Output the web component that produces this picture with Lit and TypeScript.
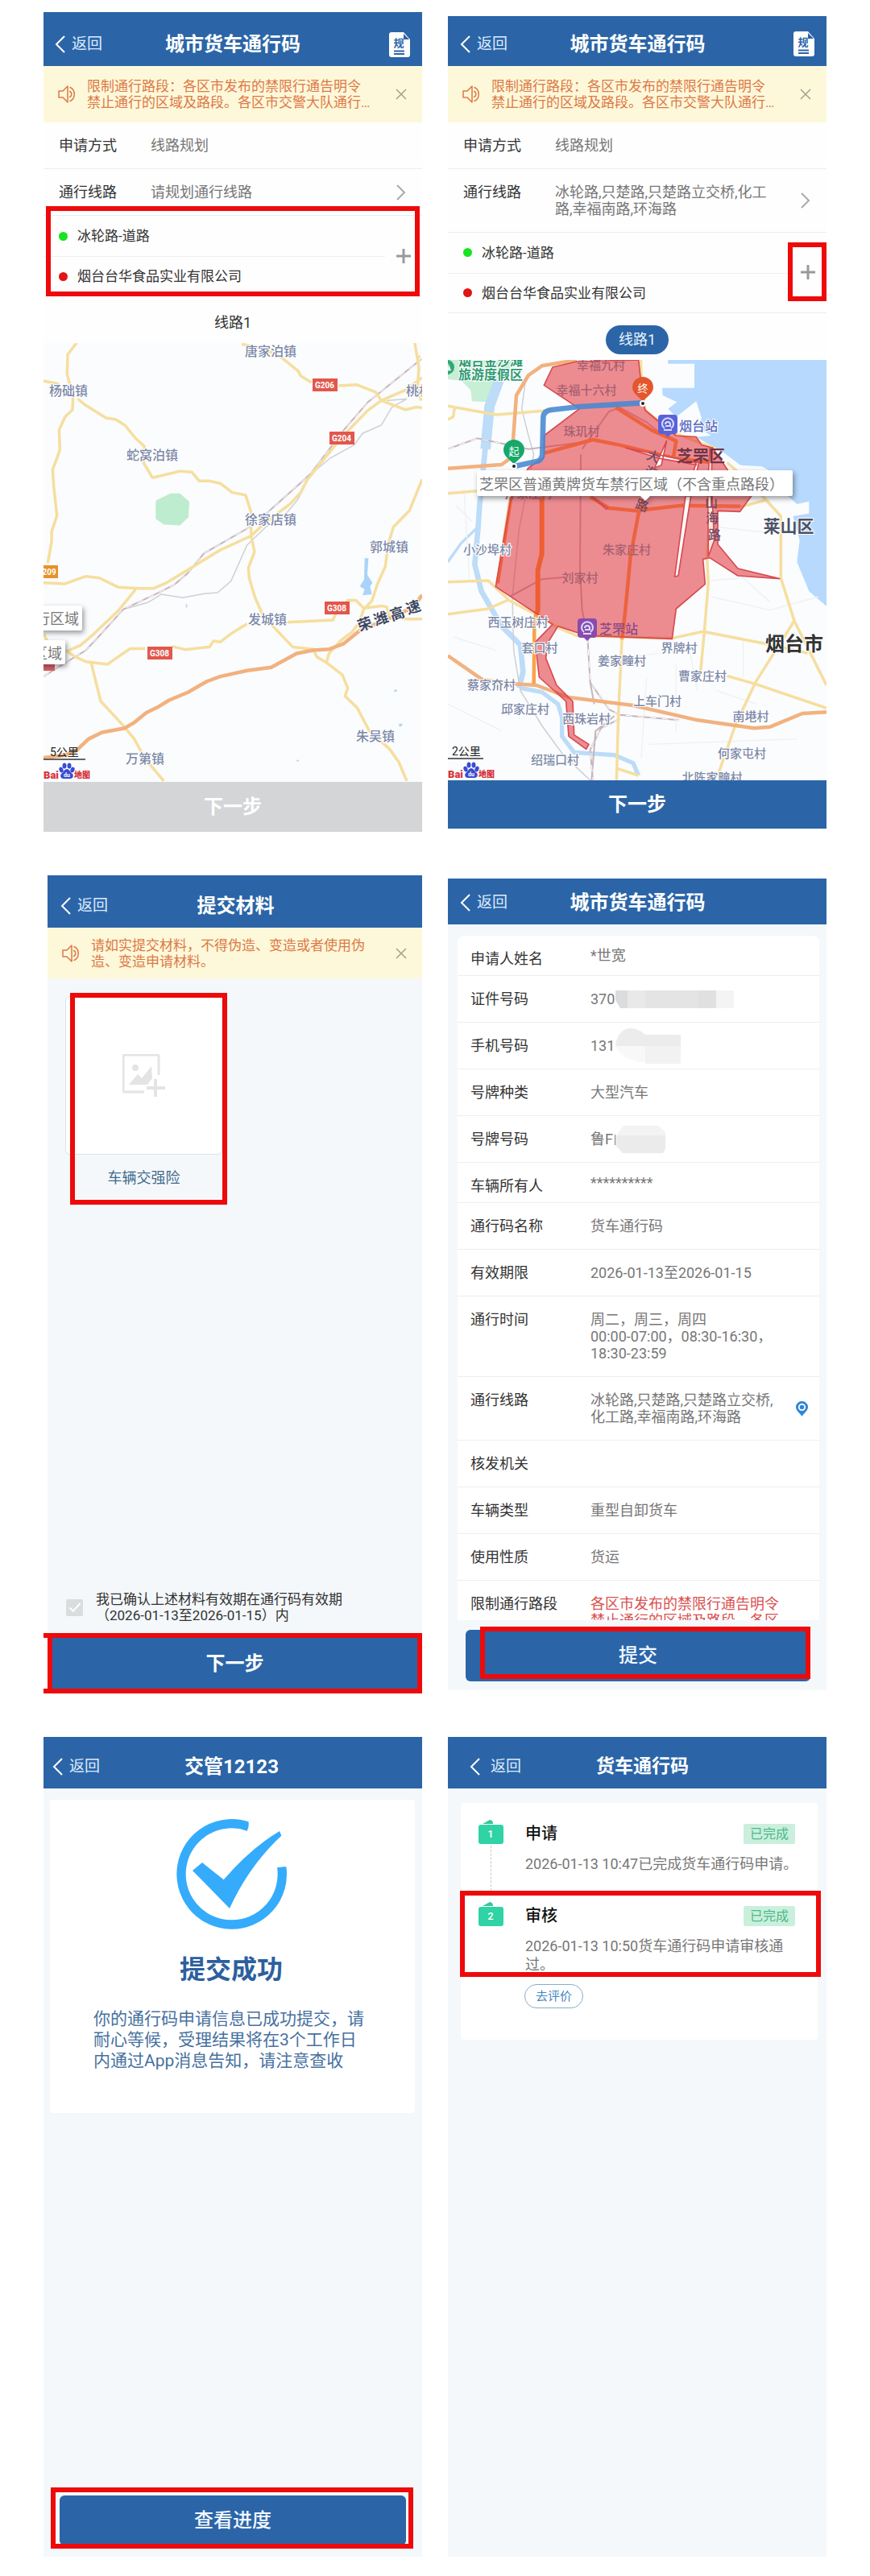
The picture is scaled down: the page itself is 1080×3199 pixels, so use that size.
import { LitElement, html, svg, css, nothing } from "lit";
import { customElement, property } from "lit/decorators.js";
import { classMap } from "lit/directives/class-map.js";

const base = css`
  :host {
    display: block;
    font-family: Roboto, "Noto Sans CJK SC", "Liberation Sans", sans-serif;
    color: #333;
  }
  *, *::before, *::after { box-sizing: border-box; }
  button { font: inherit; color: inherit; background: none; border: 0; padding: 0; margin: 0; cursor: pointer; }
  h1, h2, h3, p, ul, ol, dl, dd, dt { margin: 0; padding: 0; font-weight: inherit; font-size: inherit; }
  ul, ol { list-style: none; }
  svg { display: block; }
`;

@customElement("nav-bar")
class NavBar extends LitElement {
  @property() heading = "";
  @property({ type: Boolean }) rules = false;

  static styles = [base, css`
    .bar {
      display: grid;
      grid-template-columns: 1fr auto 1fr;
      align-items: center;
      height: calc(54px + var(--strip, 10px));
      padding: var(--strip, 10px) 14px 0 var(--lead, 14px);
      background: #2b65a7;
      color: #fff;
    }
    .back { display: flex; align-items: center; gap: var(--back-gap, 8px); font-size: 19px; line-height: 24px; color: #dcebff; text-decoration: none; }
    .title { font-size: var(--title-size, 24px); line-height: 32px; font-weight: 700; }
    .rules { justify-self: end; }
  `];

  render() {
    return html`<header class="bar">
      <a class="back" href="#back">
        <svg width="13" height="22" viewBox="0 0 13 22" fill="none" stroke="#fff" stroke-width="2"><path d="M12 1 2 11l10 10" /></svg>
        返回
      </a>
      <h2 class="title">${this.heading}</h2>
      ${this.rules ? html`<button class="rules" aria-label="规则">
        <svg width="27" height="31" viewBox="0 0 27 31">
          <path d="M3 0h15l8 9v19a3 3 0 0 1-3 3H3a3 3 0 0 1-3-3V3a3 3 0 0 1 3-3z" fill="#fff" />
          <path d="M18 2v7h7z" fill="#2b65a7" />
          <text x="12" y="18" font-size="13" font-weight="700" text-anchor="middle" fill="#2b65a7">规</text>
          <path d="M6 23.500h13M6 27h13" stroke="#2b65a7" stroke-width="2" />
        </svg>
      </button>` : nothing}
    </header>`;
  }
}

@customElement("notice-bar")
class NoticeBar extends LitElement {
  @property() text = "";

  static styles = [base, css`
    .notice {
      display: grid;
      grid-template-columns: 22px 1fr 16px;
      column-gap: 14px;
      align-items: center;
      min-height: var(--notice-height, 70px);
      padding: 0 17px 0 18px;
      background: #fdf8d9;
      color: #dc7847;
      font-size: 17px;
      line-height: 20px;
    }
    .text { max-width: 356px; }
  `];

  render() {
    return html`<div class="notice" role="status">
      <svg width="22" height="22" viewBox="0 0 22 22" fill="none" stroke="#dc7847" stroke-width="1.500" stroke-linejoin="round">
        <path d="M1 7h5l6-6v20l-6-6H1z" />
        <path d="M15 2.500c7 3 7 14 0 17M14.500 7.500c3 1 3 6 0 7" stroke-linecap="round" />
      </svg>
      <p class="text">${this.text}</p>
      <button aria-label="关闭">
        <svg width="14" height="14" viewBox="0 0 14 14" stroke="#a3a08f" stroke-width="1.500"><path d="M1 1l12 12M13 1 1 13" /></svg>
      </button>
    </div>`;
  }
}

type Label = [number, number, string];

const scaleAndLogo = (x: number, y: number, label: string, width: number) => svg`
  <text class="scale" x=${x} y=${y - 9}>${label}</text>
  <path d="M0 ${y}H${width}" stroke="#333" stroke-width="1.500" />
  <g transform="translate(0 ${y + 19})">
    <text class="logo latin" x="0" y="0">Bai</text>
    <g fill="#3b4bd0">
      <ellipse cx="22" cy="-6" rx="2.500" ry="3.500" transform="rotate(-20 22 -6)" />
      <ellipse cx="26" cy="-11" rx="2.500" ry="3.500" />
      <ellipse cx="32" cy="-11" rx="2.500" ry="3.500" />
      <ellipse cx="36" cy="-6" rx="2.500" ry="3.500" transform="rotate(20 36 -6)" />
      <path d="M29-7c3 0 4 4 7 6 2 3 0 6-3 6h-8c-3 0-5-3-3-6 3-2 4-6 7-6z" />
    </g>
    <text class="du" x="29" y="1">du</text>
    <text class="logo" x="38" y="0">地图</text>
  </g>`;

const mapStyles = [base, css`
  svg { width: 100%; height: auto; overflow: hidden; background: #fafcfe; }
  text { dominant-baseline: central; }
  .place { font-size: 15px; font-weight: 500; fill: #7c88a8; text-anchor: middle; paint-order: stroke; stroke: #fff; stroke-width: 2px; }
  .town { font-size: 16px; }
  .inside { stroke: none; fill: #a9606f; }
  .scale { font-size: 14px; fill: #222; }
  .logo { font-size: 10px; font-weight: 900; fill: #d8323a; }
  .latin { font-size: 13px; }
  .du { font-size: 7px; font-weight: 700; fill: #fff; text-anchor: middle; }
  .shield { font-size: 10px; font-weight: 700; fill: #fff; text-anchor: middle; }
  .tip { font-size: 18px; fill: #777; }
  .box { filter: drop-shadow(2px 3px 3px rgba(0, 0, 0, 0.4)); }
  .road { fill: none; stroke: #f6de9d; stroke-linejoin: round; vector-effect: non-scaling-stroke; stroke-width: 3.500px; }
  .highway { fill: none; stroke: #f2b17e; stroke-linejoin: round; vector-effect: non-scaling-stroke; stroke-width: 4.500px; }
  .rail { fill: none; stroke: #c8b4bd; vector-effect: non-scaling-stroke; stroke-width: 2px; }
  .rail-gap { fill: none; stroke: #fff; vector-effect: non-scaling-stroke; stroke-width: 1px; stroke-dasharray: 8 7; }
  .track { fill: none; stroke: #cfd0d6; vector-effect: non-scaling-stroke; stroke-width: 1.500px; }
  .express { font-size: 18px; font-weight: 700; fill: #3c4660; text-anchor: middle; paint-order: stroke; stroke: #fff; stroke-width: 2px; }
`];

@customElement("county-map")
class CountyMap extends LitElement {
  static styles = mapStyles;

  private towns: Label[] = [
    [282, 10, "唐家泊镇"], [31, 59, "杨础镇"], [135, 139, "蛇窝泊镇"], [282, 219, "徐家店镇"],
    [429, 253, "郭城镇"], [278, 343, "发城镇"], [412, 488, "朱吴镇"], [126, 516, "万第镇"], [466, 59, "桃村"],
  ];
  private shields: Label[] = [[349, 52, "G206"], [370, 118, "G204"], [364, 329, "G308"], [144, 385, "G308"]];

  render() {
    const rail = "M42 1080 100 1050 200 1000 240 965 340 875 470 825 530 800 580 765 640 705 800 630 850 600 1000 490 1040 460 1160 330 1250 245 1452 112";
    return html`<svg viewBox="0 0 470 545" role="img" aria-label="地图">
      <g transform="scale(.33333 .408) translate(-42 -65)">
        <path d="M460 545 515 523H550L585 548 582 595 550 620 490 617 460 600z" fill="#bdecce" />
        <path d="M1238 720H1252L1248 770 1267 795 1258 806 1265 830 1230 833 1238 815 1220 805 1236 785z" fill="#a9d3fa" />
        <path d="M1348 1120h10v6h-10zM1366 1224h14l-6 8h-8zM985 1334h8v4h-8zM572 860h5v10h-5z" fill="#b5d4ea" />
        <path class="track" d="M340 875 430 855 480 830 560 840 640 828 690 825 740 790 800 680 870 625 950 580 990 540 1030 470 1110 415 1200 375 1230 340 1300 315 1340 260 1395 235 1320 240" />
        <path class="rail" d=${rail} />
        <path class="rail-gap" d=${rail} />
        <path class="road" d="M165 65 132 100 130 160 138 185 152 230 150 268 122 290 100 330 103 390 90 420 76 450 80 500 92 590 72 640V670L58 735" />
        <path class="road" d="M42 180 100 190M170 235 200 255 275 293 310 297 345 315 385 355 418 380 415 430 448 475 550 455 595 458 622 485 660 485 700 492 745 520 795 528 815 580V652" />
        <path class="road" d="M780 68 870 85 930 110 990 150 1000 165 1040 185M1140 195 1210 192 1280 215 1300 240 1390 268 1430 260 1452 262" />
        <path class="road" d="M42 795 120 798 200 775 250 780 320 808 400 812H450L500 795 600 745 700 695 815 652 870 610 960 555 1000 520 1025 480 1100 405 1160 345 1250 270 1300 240 1390 208 1452 170" />
        <path class="road" d="M815 652 828 700 805 750 808 780 830 840 860 895 900 930 970 990 1045 997 1060 1020 1100 1040 1155 1075 1175 1115 1165 1140 1210 1175 1255 1245 1330 1300 1365 1340 1395 1398" />
        <path class="road" d="M385 815 320 880 230 950 180 985 130 1003 160 1020 200 1035 280 1043 320 1020 365 995H420M520 988 570 998 660 990 675 972 700 975 740 950 800 920M950 915 1120 908 1130 890M42 950 55 970" />
        <path class="road" d="M220 1040 255 1155 340 1230 380 1270 420 1330 490 1398" />
        <path class="road" d="M1452 480 1405 575 1345 625 1325 680 1315 745 1285 800 1265 850 1235 875 1215 920 1190 945 1150 970 1105 1010 1095 1040" />
        <path class="road" d="M1165 870 1175 848H1205L1235 872 1300 865 1320 868 1330 895 1390 905H1452M1425 65 1440 140 1436 190 1448 240M1430 110 1445 105" />
        <path class="highway" d="M42 1327 120 1320 165 1305 210 1270 260 1250 345 1237 380 1220 425 1190 470 1172 510 1152 580 1128 650 1095 700 1080 800 1062 890 1052 985 1010 1045 1000 1105 997 1160 980 1220 940 1340 900 1420 868 1452 832" />
      </g>
      ${this.towns.map(([x, y, t]) => svg`<text class="place town" x=${x} y=${y}>${t}</text>`)}
      ${this.shields.map(([x, y, t]) => svg`
        <rect x=${x - 15} y=${y - 8} width="31" height="16" fill="#e2574c" />
        <text class="shield" x=${x} y=${y}>${t}</text>`)}
      <rect x="-12" y="276" width="30" height="16" fill="#e8912c" />
      <text class="shield" x="4" y="284">S209</text>
      <text class="express" transform="translate(399 349) rotate(-20)">荣</text>
      <text class="express" transform="translate(419 342) rotate(-18)">潍</text>
      <text class="express" transform="translate(439 336) rotate(-18)">高</text>
      <text class="express" transform="translate(459 328) rotate(-18)">速</text>
      <rect x="0" y="398" width="14" height="9" fill="#d9636b" />
      <rect class="box" x="-10" y="326" width="58" height="31" rx="2" fill="#fff" />
      <text class="tip" x="44" y="342" text-anchor="end">行区域</text>
      <rect class="box" x="-10" y="369" width="37" height="30" rx="2" fill="#fff" />
      <text class="tip" x="23" y="385" text-anchor="end">区域</text>
      ${scaleAndLogo(8, 517, "5公里", 52)}
    </svg>`;
  }
}

@customElement("city-map")
class CityMap extends LitElement {
  static styles = [mapStyles, css`
    .sea { fill: #b6d9fd; }
    .river { fill: none; stroke: #bcdcf8; stroke-linejoin: round; }
    .zone { fill: rgba(224, 44, 52, 0.54); stroke: #d94a50; stroke-width: 5px; stroke-linejoin: round; }
    .gap { fill: #fff; stroke: #d94a50; stroke-width: 5px; }
    .inner { stroke: #fca24a; }
    .artery { stroke: #ff9a30; stroke-width: 6px; }
    .scenic { font-size: 16px; font-weight: 700; fill: #2f9a72; text-anchor: middle; paint-order: stroke; stroke: #fff; stroke-width: 2px; }
    .district { font-size: 21px; font-weight: 700; fill: #4b5368; text-anchor: middle; paint-order: stroke; stroke: #fff; stroke-width: 2px; }
    .core { fill: #6f3446; stroke: none; font-size: 20px; }
    .city { font-size: 24px; fill: #333; }
    .station { font-size: 16px; font-weight: 500; fill: #5a6cc0; text-anchor: middle; paint-order: stroke; stroke: #fff; stroke-width: 2px; }
    .station.covered { fill: #8e4a86; stroke: none; }
    .rail-name { font-size: 16px; font-weight: 500; fill: #6f4a66; text-anchor: middle; }
    .pin { font-size: 13px; fill: #fff; text-anchor: middle; }
  `];

  private outer: Label[] = [
    [49, 236, "小沙埠村"], [87, 326, "西玉树庄村"], [114, 358, "套口村"], [216, 374, "姜家疃村"],
    [287, 358, "界牌村"], [316, 393, "曹家庄村"], [54, 404, "蔡家夼村"], [96, 434, "邱家庄村"],
    [260, 424, "上车门村"], [172, 446, "西珠岩村"], [376, 443, "南塂村"], [365, 489, "何家屯村"],
    [133, 497, "绍瑞口村"], [328, 519, "北陈家疃村"],
  ];
  private inner: Label[] = [
    [190, 7, "幸福九村"], [172, 38, "幸福十六村"], [166, 89, "珠玑村"], [222, 236, "朱家庄村"],
    [164, 271, "刘家村"], [100, 166, "孙家庄村"],
  ];

  private pin(x: number, y: number, color: string, mark: string) {
    return svg`<g transform="translate(${x} ${y})">
      <path d="M0 17C-4 11-13 7-13-1a13 13 0 0 1 26 0C13 7 4 11 0 17z" fill=${color} />
      <text class="pin" x="0" y="0">${mark}</text>
      <circle cx="0" cy="19" r="3" fill="#222" stroke="#fff" stroke-width="2" />
    </g>`;
  }

  private stop(x: number, y: number, color: string) {
    return svg`<g transform="translate(${x} ${y})">
      <path d="M4 0h16a4 4 0 0 1 4 4v16a4 4 0 0 1-4 4h-4l-4 4-4-4H4a4 4 0 0 1-4-4V4a4 4 0 0 1 4-4z" fill=${color} />
      <path d="M8 17a7 7 0 1 1 8 0M9 12a3 3 0 0 1 6 0v2H9M7 19h10" fill="none" stroke="#d9dcff" stroke-width="2" />
    </g>`;
  }

  render() {
    return html`<svg viewBox="0 0 470 522" role="img" aria-label="禁行区域地图">
      <g transform="scale(.33333) translate(0 -18)">
        <path d="M0 18H250L215 90 150 175 90 172 85 130 50 95 0 90z" fill="#c6efd5" />
        <path class="sea" d="M820 18H1410V935L1345 880 1300 770 1310 690 1285 600 1345 590V545L1300 555 1240 500 1215 440 1170 415 1090 410 1030 365 985 340 925 305 980 300 930 268 945 235 925 172 850 230 820 200 853 175 800 150 798 122H918V32H820z" />
        <path class="river" stroke-width="38" d="M190 95 155 190 140 350" />
        <path class="river" stroke-width="20" d="M140 340 118 560 112 650 100 780 125 880 200 1010 270 1080 280 1180 265 1240" />
        <path class="river" stroke-width="10" d="M112 640 50 700 0 770M200 1010 240 1040" />
        <path class="river" stroke-width="16" d="M270 1240 350 1255 410 1300 425 1350V1420L470 1480 620 1490 690 1520 710 1566" />
        <path fill="none" stroke="#eef0f3" stroke-width="4" d="M980 840 1100 830 1200 920M980 900 1200 950 1380 900M700 1120 900 1100 930 1250M60 500 80 830M1000 1250 1150 1300M0 1300 200 1400M750 1450 1300 1430M1000 640 1180 660M850 1150V1400M740 1200 720 1500M1100 1060V1200M20 1050 180 1100M30 560 90 620" />
        <path class="track" d="M290 90 275 200 300 300 320 370 265 650 240 900 245 1100 270 1250 350 1380 430 1490 530 1584" />
        <path class="rail" d="M0 350 110 310 300 350 500 325M500 350 600 210 640 195 740 250 815 310M495 370 492 800 500 950 520 1050 530 1220 600 1320 640 1340 860 1360M530 1220 545 1300M640 1355 570 1390 530 1470 540 1584M620 1345 550 1400 535 1584M230 900 350 835 430 828" />
        <path class="rail-gap" d="M0 350 110 310 300 350M520 1050 530 1220 600 1320 640 1340 860 1360M640 1355 570 1390 530 1470 540 1584" />
        <path class="road" d="M0 190 180 222 390 205M0 240 20 230 25 195M0 515 240 495M0 845 150 840 230 915 325 965 410 1015 480 1045 835 1055 950 1030 1180 1075 1340 1110M0 965 150 945 225 912M965 755 970 850 955 1030 940 1190M648 1060 635 1340 628 1584M1090 565 1185 540 1240 600V830L1290 990 1410 1230M1185 540 1130 480 1040 400M1290 990 1145 1220 1070 1380 1005 1566M1040 1195 1145 1225 1410 1315M630 1540 710 1566" />
        <path class="highway" d="M480 18 350 40 300 75 255 150 242 330 238 380 200 408 0 422M0 1120 130 1210 250 1225 330 1230 450 1275 690 1305 930 1360 1140 1390 1200 1385 1320 1335 1410 1330" />
        <path class="highway inner" d="M360 365 540 315 640 335 850 385 980 400M625 195 760 280 850 320 840 380M530 528 600 570 700 580 870 560 1090 563M735 530 710 590 680 750 660 960 648 1060M235 530 185 850" />
        <path class="highway artery" d="M350 530V740L335 800V950L325 985" />
        <path class="highway inner" d="M325 985 322 1010 320 1225" />
        <path class="road" d="M718 18 722 120 735 205 830 285 1000 350M975 380 978 560 965 755" />
        <path class="zone" d="M390 45 480 24 710 18 718 90 728 180 735 205 850 300 925 305 945 335 985 345 1030 410 1090 500 1130 525 1088 583 1005 580V705L1080 795 1235 833 1080 822 975 755 950 760 958 853 850 945 835 1057 515 1045 410 1010 370 1075 365 1130 405 1230 465 1290 470 1415 525 1450 515 1468 450 1420 440 1290 340 1200 325 1070 390 1003 178 863 235 530 300 420 358 380V300L490 200 358 112z" />
        <path class="gap" d="M885 525H905L858 822 845 825zM660 345 920 400 925 408 790 385zM770 420 815 318 795 410zM925 400H935L910 500H895zM540 530 595 570 590 574z" />
        <path d="M968 525H984L992 690 970 750zM976 345 985 345 982 440H970z" fill="#fdeadd" stroke="#d94a50" stroke-width="5" />
        <path d="M245 415 335 395Q352 388 352 365L355 235Q355 208 385 204L490 192 725 178" fill="none" stroke="#4788d2" stroke-opacity=".88" stroke-width="20" />
        <circle cx="-4" cy="45" r="28" fill="#2fa873" />
        <path d="M2 30l10 28H0z" fill="#fff" />
      </g>
      <text class="scenic" x="53" y="1">烟台金沙滩</text>
      <text class="scenic" x="53" y="18">旅游度假区</text>
      ${this.outer.map(([x, y, t]) => svg`<text class="place" x=${x} y=${y}>${t}</text>`)}
      ${this.inner.map(([x, y, t]) => svg`<text class="place inside" x=${x} y=${y}>${t}</text>`)}
      <text class="rail-name" transform="translate(255 120) rotate(20)">大</text>
      <text class="rail-name" transform="translate(252 140) rotate(20)">海</text>
      <text class="rail-name" transform="translate(241 181) rotate(20)">路</text>
      <text class="rail-name" x="327" y="177">山</text>
      <text class="rail-name" x="328" y="196">海</text>
      <text class="rail-name" x="331" y="217">路</text>
      <text class="district core" x="314" y="120">芝罘区</text>
      <text class="district" x="423" y="207">莱山区</text>
      <text class="district city" x="430" y="353">烟台市</text>
      ${this.stop(261, 68, "#5a62d8")}
      <text class="station" x="311" y="82">烟台站</text>
      ${this.stop(161, 321, "#8a4bab")}
      <text class="station covered" x="212" y="334">芝罘站</text>
      <g class="box">
        <path d="M38 137H426a2 2 0 0 1 2 2V167a2 2 0 0 1-2 2H251l-6 6-6-6H38a2 2 0 0 1-2-2V139a2 2 0 0 1 2-2z" fill="#fff" />
      </g>
      <text class="tip" x="39" y="154">芝罘区普通黄牌货车禁行区域（不含重点路段）</text>
      ${this.pin(242, 35, "#e4572b", "终")}
      ${this.pin(82, 113, "#16a86b", "起")}
      ${scaleAndLogo(5, 495, "2公里", 44)}
    </svg>`;
  }
}

interface Field {
  label: string;
  value: string;
  short?: boolean;
  alert?: boolean;
  pin?: boolean;
  mask?: unknown;
}

const fields: Field[] = [
  { label: "申请人姓名", value: "*世宽", short: true },
  { label: "证件号码", value: "370", mask: html`<svg class="mask" width="148" height="22" viewBox="0 0 148 22">
      <path d="M0 0H15V22H6L0 12z" fill="#dcdcdc" /><path d="M15 0h22v22H15z" fill="#e9e9e9" /><path d="M37 0h66v22H37z" fill="#e4e4e4" />
      <path d="M103 0h22v22h-22z" fill="#e0e0e0" /><path d="M125 0h22v22h-22z" fill="#f4f4f4" /></svg>` },
  { label: "手机号码", value: "131", mask: html`<svg class="mask" width="81" height="44" viewBox="0 0 81 44">
      <path d="M0 22C2 5 12 0 18 0c8 0 14 3 19 8h44v14z" fill="#ececec" /><path d="M0 22h37v20C18 42 5 34 0 22z" fill="#f8f8f8" />
      <path d="M37 22h44v22H37z" fill="#f2f2f2" /></svg>` },
  { label: "号牌种类", value: "大型汽车" },
  { label: "号牌号码", value: "鲁F", mask: html`<svg class="mask plate" width="64" height="36" viewBox="0 0 64 36">
      <path d="M1 12h1v13H1z" fill="#888" /><path d="M3 13 12 1h43l9 8v4z" fill="#f3f3f3" /><path d="M2 13h62v17l-3 5H11L2 25z" fill="#ebebeb" /></svg>` },
  { label: "车辆所有人", value: "**********", short: true },
  { label: "通行码名称", value: "货车通行码" },
  { label: "有效期限", value: "2026-01-13至2026-01-15" },
  { label: "通行时间", value: "周二，周三，周四\n00:00-07:00，08:30-16:30，18:30-23:59" },
  { label: "通行线路", value: "冰轮路,只楚路,只楚路立交桥,化工路,幸福南路,环海路", pin: true },
  { label: "核发机关", value: "" },
  { label: "车辆类型", value: "重型自卸货车" },
  { label: "使用性质", value: "货运" },
  { label: "限制通行路段", value: "各区市发布的禁限行通告明令禁止通行的区域及路段。各区", alert: true },
];

const steps = [
  { name: "申请", text: "2026-01-13 10:47已完成货车通行码申请。" },
  { name: "审核", text: "2026-01-13 10:50货车通行码申请审核通过。" },
];

@customElement("app-root")
class AppRoot extends LitElement {
  static styles = [base, css`
    :host { background: #fff; }
    .board {
      display: grid;
      grid-template-columns: minmax(0, 1fr) minmax(0, 1fr);
      gap: 54px 32px;
      align-items: center;
      padding: 15px 54px 24px;
    }
    .screen { position: relative; display: flex; flex-direction: column; min-width: 0; background: #fefefe; }
    .soft { background: #f4f8fa; }
    .plan { --strip: 13px; }
    .planned { --strip: 8px; --lead: 15px; }
    .upload { --strip: 11px; --lead: 16px; --notice-height: 63px; aspect-ratio: 465 / 1016; margin-left: 5px; }
    .review { --strip: 3px; --lead: 15px; aspect-ratio: 470 / 1008; min-height: 0; }
    .result { --lead: 11px; aspect-ratio: 470 / 1018; }
    .progress { --lead: 27px; --back-gap: 13px; --title-size: 23px; aspect-ratio: 470 / 1018; }

    .mark { position: absolute; border: 6px solid #ee0a0a; pointer-events: none; }
    .mark-points { inset: -12px 3px -1px; }
    .mark-add { inset: 12px 0 14px auto; width: 48px; }
    .mark-upload { inset: -4px -6px 0 6px; }
    .mark-next { inset: 0 0 0 -5px; border-left: 0; }
    .mark-next::before { content: ""; position: absolute; inset: 0 auto 0 5px; width: 6px; background: #ee0a0a; }
    .mark-submit { inset: -4px 0 3px 18px; }
    .mark-result { inset: -10px -9px -4px -11px; }
    .mark-step { inset: -14px -4px -4px -1px; }

    .line { display: grid; grid-template-columns: 114px 1fr 14px; align-items: center; padding: 18px 18px 18px 19px; border-bottom: 1px solid #ececec; font-size: 18px; line-height: 21px; }
    .line dt { align-self: start; }
    .line dd { padding-right: 32px; color: #777; }

    .points { position: relative; display: grid; grid-template-columns: 1fr 46px; border-bottom: 1px solid #ececec; }
    .point { display: flex; align-items: center; gap: 12px; height: 50px; padding-left: 19px; font-size: 17px; line-height: 20px; }
    .point + .point { border-top: 1px solid #efefef; height: 49px; }
    .dot { width: 11px; height: 11px; border-radius: 50%; background: #15e51f; }
    .dot.end { background: #e21414; }
    .add { display: grid; place-items: center; }

    .tabs { display: flex; justify-content: center; padding: 15px 0 7px; }
    .tab { height: 36px; padding: 0 16px; border-radius: 18px; font-size: 18px; line-height: 36px; }
    .tab.on { background: #2b65a7; color: #e6f2ff; }

    .next { height: 62px; background: #2b65a7; color: #fff; font-size: 24px; font-weight: 700; line-height: 32px; }
    .next.low { height: 60px; }
    .next:disabled { background: #d4d5d6; cursor: default; }

    .body { flex: 1; padding: 22px; }
    .card { position: relative; width: 195px; }
    .drop { display: grid; place-items: center; width: 100%; height: 197px; border: 1px solid #dfe3e5; border-radius: 6px; background: #fff; }
    .caption { padding: 18px 0 22px; text-align: center; font-size: 18px; line-height: 22px; color: #40688c; }
    .agree { display: flex; gap: 16px; align-items: center; padding: 0 23px 12px; font-size: 17px; line-height: 20px; }
    .tick { appearance: none; display: grid; place-items: center; width: 21px; height: 21px; margin: 0; border-radius: 2px; background: #dadddd; }
    .tick:checked::before { content: ""; width: 14px; height: 7px; margin-top: -4px; border: solid #fff; border-width: 0 0 2px 2px; rotate: -48deg; }
    .footer { position: relative; display: grid; }
    .footer .next { height: 75px; }

    .sheet { flex: 1 1 0; min-height: 0; margin: 14px 9px 12px 12px; overflow: hidden; border-radius: 8px 8px 0 0; background: #fff; }
    .field { display: grid; grid-template-columns: 149px 1fr 44px; padding: 18px 0 18px 16px; border-bottom: 1px solid #eceef0; font-size: 18px; line-height: 21px; }
    .field dd { position: relative; min-height: 21px; color: #777; white-space: pre-line; }
    .field.short { padding: 14px 0 10px 16px; }
    .field.short dt { padding-top: 4px; }
    .field .alert { color: #d9504f; }
    .where { align-self: center; justify-self: center; }
    .mask { position: absolute; left: 31px; top: 50%; translate: 0 -50%; }
    .plate { left: 29px; }
    .action { position: relative; display: grid; margin: 0 20px 11px 22px; }
    .wide { height: 64px; border-radius: 6px; background: #2b65a7; color: #f2f8ff; font-size: 24px; font-weight: 500; line-height: 32px; }

    .done { display: flex; flex-direction: column; align-items: center; margin: 14px 9px auto 8px; padding: 24px 57px 52px 54px; border-radius: 4px; background: #fff; }
    .done h3 { margin-top: 30px; font-size: 32px; font-weight: 700; line-height: 40px; color: #2d5f9e; }
    .done p { margin-top: 28px; font-size: 21px; line-height: 26px; color: #47719f; }
    .result .action { margin: 0 20px 14px; }
    .result .wide { height: 62px; }

    .track { margin: 18px 11px auto 16px; padding: 21px 0 39px; border-radius: 4px; background: #fff; }
    .step { position: relative; display: grid; grid-template-columns: 31px 1fr; gap: 27px; padding: 0 18px 0 22px; }
    .step:first-child { padding-bottom: 36px; }
    .step:first-child .icon::after { content: ""; flex: 1; margin-bottom: -22px; border-left: 1px dashed #c9c9c9; }
    .icon { display: flex; flex-direction: column; align-items: center; gap: 2px; }
    .icon text { font: 500 13px Roboto, sans-serif; fill: #fff; text-anchor: middle; }
    .head { display: flex; justify-content: space-between; align-items: center; margin-top: 5px; padding-right: 10px; font-size: 20px; font-weight: 500; line-height: 25px; color: #111; }
    .badge { padding: 0 8px; border-radius: 2px; background: #caefdd; color: #4dba88; font-size: 16px; font-weight: 400; line-height: 25px; }
    .step p { margin-top: 13px; font-size: 18px; line-height: 23px; color: #777; }
    .rate { display: block; margin: 13px 0 0 79px; padding: 0 13px; height: 30px; border: 1px solid #86aecb; border-radius: 15px; color: #3f86c2; font-size: 15px; line-height: 28px; }
  `];

  private route(value: string, planned: boolean) {
    return html`
      <nav-bar heading="城市货车通行码" rules></nav-bar>
      <notice-bar text="限制通行路段：各区市发布的禁限行通告明令禁止通行的区域及路段。各区市交警大队通行…"></notice-bar>
      <dl>
        <div class="line"><dt>申请方式</dt><dd>线路规划</dd></div>
        <div class="line"><dt>通行线路</dt><dd>${value}</dd>
          <button aria-label="选择通行线路"><svg width="12" height="20" viewBox="0 0 12 20" fill="none" stroke="#aaa" stroke-width="2"><path d="M1 1l9 9-9 9" /></svg></button>
        </div>
      </dl>
      <div class="points">
        <ul>
          <li class="point"><span class="dot"></span>冰轮路-道路</li>
          <li class="point"><span class="dot end"></span>烟台台华食品实业有限公司</li>
        </ul>
        <button class="add" aria-label="添加"><svg width="20" height="20" viewBox="0 0 20 20" stroke="#999" stroke-width="3"><path d="M10 1v18M1 10h18" /></svg></button>
        <div class="mark ${planned ? "mark-add" : "mark-points"}"></div>
      </div>
      <div class="tabs"><button class=${classMap({ tab: true, on: planned })}>线路1</button></div>`;
  }

  private stepIcon(n: number) {
    return html`<svg width="31" height="30" viewBox="0 0 31 30">
      <path d="M5 5 14 0q3 0 4 4v1z" fill="#35c69b" />
      <rect y="6" width="31" height="24" rx="3" fill="#2fd3a5" />
      <text x="15" y="22">${n}</text>
    </svg>`;
  }

  render() {
    return html`<main class="board">
      <section class="screen plan">
        ${this.route("请规划通行线路", false)}
        <county-map></county-map>
        <button class="next" disabled>下一步</button>
      </section>

      <section class="screen planned">
        ${this.route("冰轮路,只楚路,只楚路立交桥,化工路,幸福南路,环海路", true)}
        <city-map></city-map>
        <button class="next low">下一步</button>
      </section>

      <section class="screen soft upload">
        <nav-bar heading="提交材料"></nav-bar>
        <notice-bar text="请如实提交材料，不得伪造、变造或者使用伪造、变造申请材料。"></notice-bar>
        <div class="body">
          <div class="card">
            <button class="drop" aria-label="上传车辆交强险">
              <svg width="53" height="53" viewBox="0 0 53 53" fill="none" stroke="#e4e4e4" stroke-width="3">
                <path d="M45 26V3a2 2 0 0 0-2-2H3a2 2 0 0 0-2 2v42a2 2 0 0 0 2 2h24" />
                <circle cx="16" cy="17" r="4" fill="#e4e4e4" stroke="none" />
                <path d="M8 38 19 25l5 5L36 15l1 15-6 8z" fill="#e4e4e4" stroke="none" />
                <path d="M41 31v22M30 42h23" stroke-width="4" />
              </svg>
            </button>
            <p class="caption">车辆交强险</p>
            <div class="mark mark-upload"></div>
          </div>
        </div>
        <label class="agree"><input class="tick" type="checkbox" checked /><span>我已确认上述材料有效期在通行码有效期<br />（2026-01-13至2026-01-15）内</span></label>
        <div class="footer">
          <button class="next">下一步</button>
          <div class="mark mark-next"></div>
        </div>
      </section>

      <section class="screen soft review">
        <nav-bar heading="城市货车通行码"></nav-bar>
        <dl class="sheet">
          ${fields.map((f) => html`<div class=${classMap({ field: true, short: !!f.short })}>
            <dt>${f.label}</dt>
            <dd class=${classMap({ alert: !!f.alert })}>${f.value}${f.mask ?? nothing}</dd>
            ${f.pin ? html`<svg class="where" width="15" height="19" viewBox="0 0 15 19">
              <path d="M7.500 19C5 15 0 12 0 7.300a7.500 7.300 0 0 1 15 0C15 12 10 15 7.500 19z" fill="#2f86d6" />
              <circle cx="7.500" cy="7.500" r="3.700" fill="#2f86d6" stroke="#fff" stroke-width="1.800" />
            </svg>` : nothing}
          </div>`)}
        </dl>
        <div class="action">
          <button class="wide">提交</button>
          <div class="mark mark-submit"></div>
        </div>
      </section>

      <section class="screen soft result">
        <nav-bar heading="交管12123"></nav-bar>
        <div class="done">
          <svg width="137" height="137" viewBox="0 0 411 411">
            <path d="M269 28A188 188 0 1 0 392 178" fill="none" stroke="#35abfb" stroke-width="34" />
            <path d="M269 0h60v60h-60zM375 120h36v58h-36z" fill="#fff" />
            <path d="M60 192 96 162 176 226Q275 110 384 45L391 62Q270 175 198 333z" fill="#35abfb" />
          </svg>
          <h3>提交成功</h3>
          <p>你的通行码申请信息已成功提交，请耐心等候，受理结果将在3个工作日内通过App消息告知，请注意查收</p>
        </div>
        <div class="action">
          <button class="wide">查看进度</button>
          <div class="mark mark-result"></div>
        </div>
      </section>

      <section class="screen soft progress">
        <nav-bar heading="货车通行码"></nav-bar>
        <div class="track">
          <ol>
            ${steps.map((s, i) => html`<li class="step">
              <div class="icon">${this.stepIcon(i + 1)}</div>
              <div>
                <div class="head"><h3>${s.name}</h3><span class="badge">已完成</span></div>
                <p>${s.text}</p>
              </div>
              ${i === 1 ? html`<div class="mark mark-step"></div>` : nothing}
            </li>`)}
          </ol>
          <button class="rate">去评价</button>
        </div>
      </section>
    </main>`;
  }
}
